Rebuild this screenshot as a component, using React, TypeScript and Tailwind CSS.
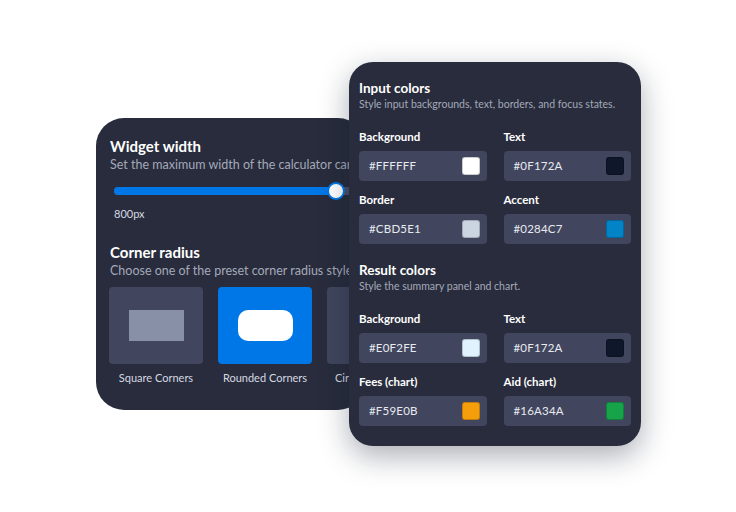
import React from "react";

type Swatch = { label: string; value: string; color: string };

const inputColors: Swatch[] = [
  { label: "Background", value: "#FFFFFF", color: "#FFFFFF" },
  { label: "Text", value: "#0F172A", color: "#0F172A" },
  { label: "Border", value: "#CBD5E1", color: "#CBD5E1" },
  { label: "Accent", value: "#0284C7", color: "#0284C7" },
];

const resultColors: Swatch[] = [
  { label: "Background", value: "#E0F2FE", color: "#E0F2FE" },
  { label: "Text", value: "#0F172A", color: "#0F172A" },
  { label: "Fees (chart)", value: "#F59E0B", color: "#F59E0B" },
  { label: "Aid (chart)", value: "#16A34A", color: "#16A34A" },
];

const ColorField = ({ label, value, color }: Swatch) => (
  <div className="flex flex-col">
    <div className="text-[11.5px] leading-[14px] font-bold text-white">{label}</div>
    <div className="mt-[7px] h-[30px] rounded-[4px] bg-[#41465e] flex items-center justify-between pl-[10px] pr-[7px]">
      <span className="text-[11.5px] tracking-[0.2px] text-[#e8eaf0]">{value}</span>
      <span
        className="w-[18px] h-[18px] rounded-[3px] border border-black/20"
        style={{ backgroundColor: color }}
      />
    </div>
  </div>
);

const ColorGroup = ({
  title,
  subtitle,
  items,
}: {
  title: string;
  subtitle: string;
  items: Swatch[];
}) => (
  <div>
    <div className="text-[13.5px] leading-[18px] font-bold text-white">{title}</div>
    <div className="text-[10.5px] leading-[14px] text-[#a4a9ba] whitespace-nowrap">{subtitle}</div>
    <div className="mt-[19px] grid grid-cols-2 gap-x-[17px] gap-y-[12px]">
      {items.map((item, i) => (
        <ColorField key={i} {...item} />
      ))}
    </div>
  </div>
);

const CornerTile = ({
  label,
  active,
  children,
}: {
  label: string;
  active?: boolean;
  children: React.ReactNode;
}) => (
  <div className="flex flex-col items-center shrink-0">
    <div
      className={`w-[94px] h-[77px] rounded-[4px] flex items-center justify-center ${
        active ? "bg-[#0077e6]" : "bg-[#41465e]"
      }`}
    >
      {children}
    </div>
    <div className="mt-[7px] text-[11px] leading-[14px] text-[#d6d9e2] whitespace-nowrap">
      {label}
    </div>
  </div>
);

export default function App() {
  return (
    <div
      className="relative w-[736px] h-[512px] bg-white overflow-hidden"
      style={{ fontFamily: "Lato, 'Noto Sans', sans-serif" }}
    >
      {/* widget settings card, partly under the colour panel */}
      <div className="absolute left-[96px] top-[118px] w-[270px] h-[292px] rounded-[28px] bg-[#282c3c] overflow-hidden pl-[13px] pt-[18px]">
        <div className="text-[15px] leading-[20px] font-bold text-white pl-[1px]">Widget width</div>
        <div className="mt-[1px] text-[12.5px] leading-[16px] text-[#a4a9ba] whitespace-nowrap pl-[1px]">
          Set the maximum width of the calculator card
        </div>
        <div className="relative mt-[14px] h-[8px] ml-[5px] w-[300px] rounded-full bg-[#4a4f66]">
          <div className="absolute left-0 top-0 h-[8px] w-[222px] rounded-full bg-[#0077e6]" />
          <div className="absolute left-[213px] top-[-5px] w-[18px] h-[18px] rounded-full bg-white border-2 border-[#0077e6]" />
        </div>
        <div className="mt-[11px] pl-[5px] text-[11px] leading-[16px] text-[#d6d9e2]">800px</div>
        <div className="mt-[20px] text-[15px] leading-[20px] font-bold text-white pl-[1px]">Corner radius</div>
        <div className="mt-[1px] text-[12.5px] leading-[16px] text-[#a4a9ba] whitespace-nowrap pl-[1px]">
          Choose one of the preset corner radius styles
        </div>
        <div className="mt-[8px] flex gap-[15px]">
          <CornerTile label="Square Corners">
            <div className="w-[55px] h-[31px] bg-[#8890a8]" />
          </CornerTile>
          <CornerTile label="Rounded Corners" active>
            <div className="w-[55px] h-[31px] rounded-[10px] bg-white" />
          </CornerTile>
          <CornerTile label="Circular Corners">
            <div className="w-[31px] h-[31px] rounded-full bg-[#8890a8]" />
          </CornerTile>
        </div>
      </div>

      {/* colour settings panel */}
      <div className="absolute left-[349px] top-[62px] w-[292px] h-[384px] rounded-[24px] bg-[#282c3c] px-[10px] pt-[17px] shadow-[0_10px_30px_rgba(15,23,42,0.35)]">
        <ColorGroup
          title="Input colors"
          subtitle="Style input backgrounds, text, borders, and focus states."
          items={inputColors}
        />
        <div className="mt-[17px]">
          <ColorGroup
            title="Result colors"
            subtitle="Style the summary panel and chart."
            items={resultColors}
          />
        </div>
      </div>
    </div>
  );
}
